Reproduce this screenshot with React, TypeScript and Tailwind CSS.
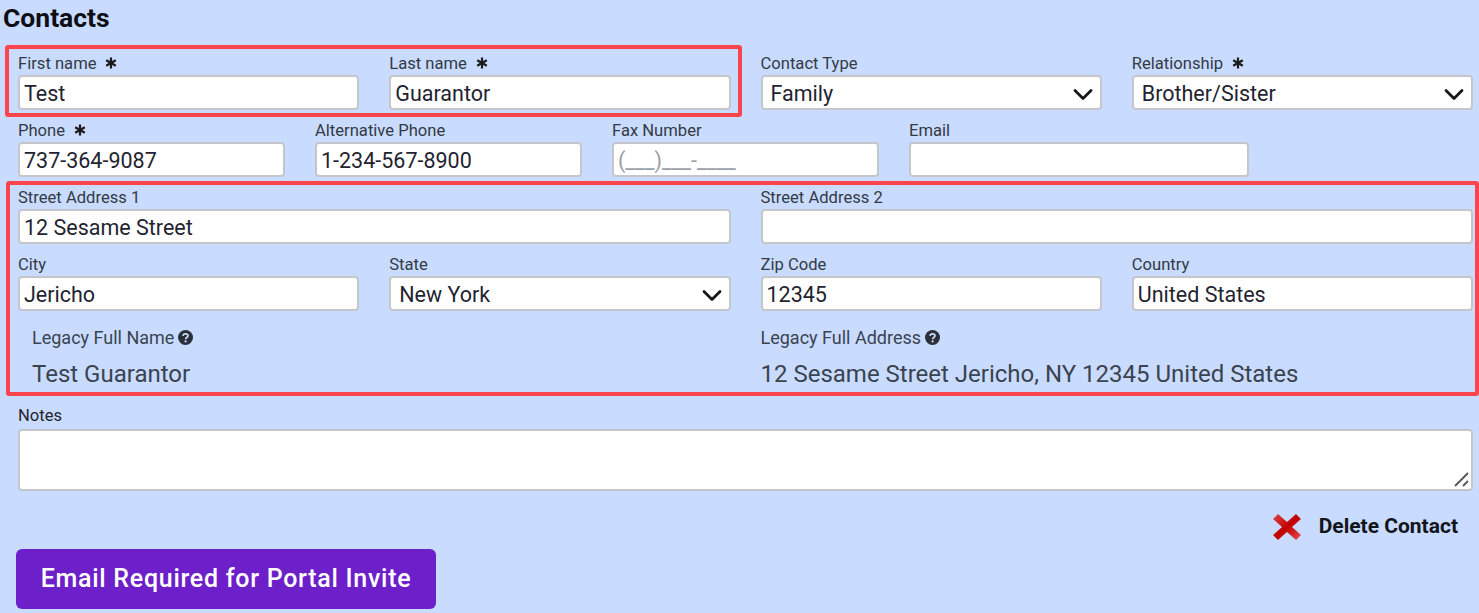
import type { ReactNode } from "react";

const Label = ({ text, required }: { text: string; required?: boolean }) => (
  <div className="h-5 flex items-start text-[16.6px] leading-[17px] text-[#333a45] whitespace-nowrap">
    {text}
    {required && <Star />}
  </div>
);

const Star = () => (
  <svg className="ml-[9px] mt-[2px]" width="12" height="12" viewBox="0 0 12 12" stroke="#1a1a1a" strokeWidth="2.200">
    <path d="M6 .5v11M1.2 3.2l9.6 5.6M10.8 3.2l-9.6 5.6" />
  </svg>
);

const Box = ({ children, className }: { children?: ReactNode; className?: string }) => (
  <div className={`h-[35px] bg-white rounded-[4px] border-2 border-[#c4c6cb] pt-[3px] flex items-center text-[21.5px] text-[#1f2430] whitespace-nowrap overflow-hidden ${className ?? ""}`}>
    {children}
  </div>
);

const Field = ({ label, value, required }: { label: string; value?: string; required?: boolean }) => (
  <div>
    <Label text={label} required={required} />
    <Box className="pl-[4px]">{value}</Box>
  </div>
);

const Select = ({ label, value, required }: { label: string; value: string; required?: boolean }) => (
  <div>
    <Label text={label} required={required} />
    <Box className="pl-[8px] pr-[7px] justify-between">
      {value}
      <svg width="20" height="13" viewBox="0 0 20 13" fill="none" stroke="#15171c" strokeWidth="2.800" strokeLinecap="round" strokeLinejoin="round">
        <path d="M2 2.500l8 8 8-8" />
      </svg>
    </Box>
  </div>
);

const Help = () => (
  <svg className="ml-[4px] mt-[1px]" width="15" height="15" viewBox="0 0 15 15">
    <circle cx="7.5" cy="7.5" r="7.5" fill="#2a2f38" />
    <path d="M5 5.8c.2-1.4 1.2-2 2.5-2 1.4 0 2.5.8 2.5 2 0 1.800-2.300 1.700-2.300 3.400" fill="none" stroke="#cbdcff" strokeWidth="1.700" />
    <circle cx="7.600" cy="11.400" r="1.100" fill="#cbdcff" />
  </svg>
);

const Legacy = ({ label, value, indent }: { label: string; value: string; indent?: boolean }) => (
  <div className={indent ? "pl-[14px]" : ""}>
    <div className="h-[31px] flex items-start text-[18px] leading-[17px] text-[#3a4350] whitespace-nowrap">
      {label}
      <Help />
    </div>
    <div className="text-[24px] leading-[28px] text-[#3a4350] whitespace-nowrap">{value}</div>
  </div>
);

export default function App() {
  return (
    <div className="relative h-[613px] overflow-hidden bg-[#c9dcff] font-['Roboto',sans-serif]">
      <div className="pl-[3px] pt-[4px] h-[55px] text-[26.5px] leading-[28px] font-bold text-[#0d0f14]">Contacts</div>

      <div className="pl-[18px] pr-[6px] flex flex-col gap-3">
        <div className="grid grid-cols-4 gap-x-[30px]">
          <Field label="First name" value="Test" required />
          <Field label="Last name" value="Guarantor" required />
          <Select label="Contact Type" value="Family" />
          <Select label="Relationship" value="Brother/Sister" required />
        </div>
        <div className="grid grid-cols-[267px_267px_267px_340px] gap-x-[30px]">
          <Field label="Phone" value="737-364-9087" required />
          <Field label="Alternative Phone" value="1-234-567-8900" />
          <div>
            <Label text="Fax Number" />
            <Box className="pl-[4px] text-[#9a9ea6]">(___)___-____</Box>
          </div>
          <Field label="Email" />
        </div>
        <div className="grid grid-cols-2 gap-x-[30px]">
          <Field label="Street Address 1" value="12 Sesame Street" />
          <Field label="Street Address 2" />
        </div>
        <div className="grid grid-cols-4 gap-x-[30px]">
          <Field label="City" value="Jericho" />
          <Select label="State" value="New York" />
          <Field label="Zip Code" value="12345" />
          <Field label="Country" value="United States" />
        </div>
        <div className="grid grid-cols-2 gap-x-[30px] pt-[6px]">
          <Legacy label="Legacy Full Name" value="Test Guarantor" indent />
          <Legacy label="Legacy Full Address" value="12 Sesame Street Jericho, NY 12345 United States" />
        </div>
        <div className="pt-[7px]">
          <div className="h-[22px] text-[16.6px] leading-[17px] text-[#1f2430]">Notes</div>
          <div className="relative h-[62px] bg-white rounded-[4px] border-2 border-[#c4c6cb]">
            <svg className="absolute right-[1px] bottom-[1px]" width="17" height="17" viewBox="0 0 17 17" stroke="#555" strokeWidth="1.800">
              <path d="M2 15L15 2M10 15l5-5" />
            </svg>
          </div>
        </div>
      </div>

      <div className="flex items-center justify-end pr-[21px] mt-[13px] h-[45px]">
        <svg className="mr-[17px]" width="30" height="30" viewBox="0 0 30 30">
          <defs>
            <linearGradient id="x" x1="0" y1="0" x2="1" y2="1">
              <stop offset="0" stopColor="#e04a4a" />
              <stop offset="0.5" stopColor="#c00000" />
              <stop offset="1" stopColor="#e85050" />
            </linearGradient>
          </defs>
          <path d="M6 2l9 8 9-8 5 5-9 8 9 8-5 5-9-8-9 8-5-5 9-8-9-8z" fill="url(#x)" />
        </svg>
        <span className="text-[21px] font-bold text-[#12151c]">Delete Contact</span>
      </div>

      <button className="ml-[16px] w-[420px] h-[60px] rounded-[6px] bg-[#6d1fc9] text-white text-[25px] font-medium tracking-[0.72px]">
        Email Required for Portal Invite
      </button>

      <div className="absolute left-[5px] top-[45px] w-[737px] h-[72px] border-[4px] border-[#fb444c] rounded-[3px]" />
      <div className="absolute left-[6px] top-[181px] w-[1473px] h-[215px] border-[4px] border-[#fb444c] rounded-[3px]" />
    </div>
  );
}
